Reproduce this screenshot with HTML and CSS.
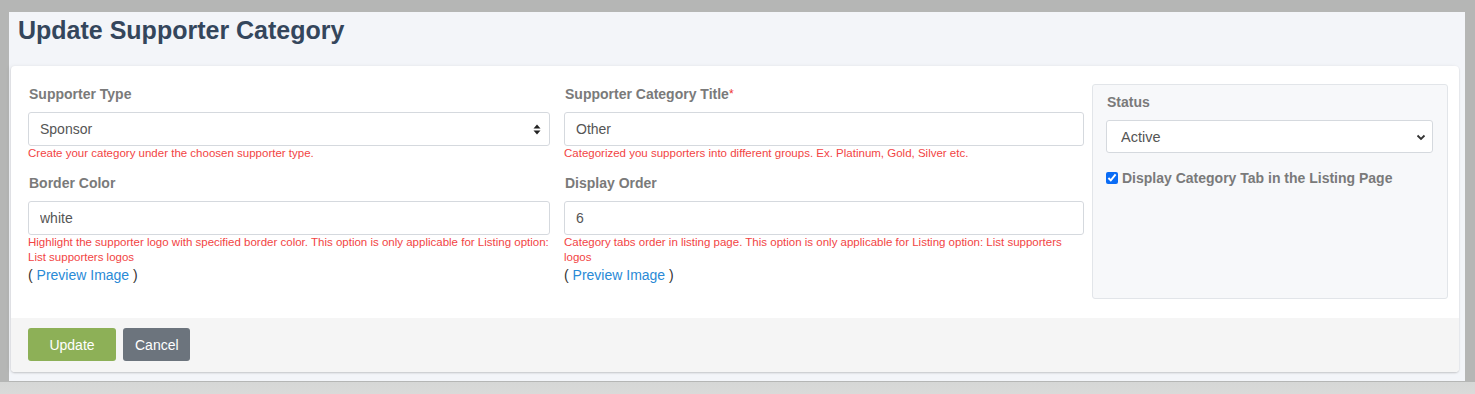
FILE: index.html
```html
<!DOCTYPE html>
<html>
<head>
    <title>Update Supporter Category</title>
    <link rel="stylesheet" href="styles.css">
</head>
<body>
    <div class="page">
        <h1>Update Supporter Category</h1>
        <form class="card">
            <div class="card-body">
                <div class="col col-first">
                    <div class="form-group">
                        <label for="type">Supporter Type</label>
                        <div class="select-wrap">
                            <select id="type" class="form-control">
                                <option>Sponsor</option>
                            </select>
                            <svg class="arrow" width="8" height="11" viewBox="0 0 8 11"><path d="M4 0.5L7.5 4.5H0.5Z M4 10.5L0.5 6.5H7.5Z" fill="#222"/></svg>
                        </div>
                        <div class="help">Create your category under the choosen supporter type.</div>
                    </div>
                    <div class="form-group">
                        <label for="border">Border Color</label>
                        <input type="text" id="border" class="form-control" value="white">
                        <div class="help">Highlight the supporter logo with specified border color. This option is only applicable for Listing option: List supporters logos</div>
                        <div class="preview">( <a href="#">Preview Image</a> )</div>
                    </div>
                </div>
                <div class="col">
                    <div class="form-group">
                        <label for="title">Supporter Category Title<span class="req">*</span></label>
                        <input type="text" id="title" class="form-control" value="Other">
                        <div class="help">Categorized you supporters into different groups. Ex. Platinum, Gold, Silver etc.</div>
                    </div>
                    <div class="form-group">
                        <label for="order">Display Order</label>
                        <input type="text" id="order" class="form-control" value="6">
                        <div class="help">Category tabs order in listing page. This option is only applicable for Listing option: List supporters logos</div>
                        <div class="preview">( <a href="#">Preview Image</a> )</div>
                    </div>
                </div>
                <div class="side-panel">
                    <label for="status">Status</label>
                    <div class="select-wrap">
                        <select id="status" class="form-control">
                            <option>Active</option>
                        </select>
                        <svg class="arrow" width="10" height="7" viewBox="0 0 10 7"><path d="M1.5 1.5L5 5L8.5 1.5" fill="none" stroke="#333" stroke-width="1.8"/></svg>
                    </div>
                    <label class="check"><input type="checkbox" checked> Display Category Tab in the Listing Page</label>
                </div>
            </div>
            <div class="card-footer">
                <button type="submit" class="btn btn-update">Update</button>
                <button type="button" class="btn btn-cancel">Cancel</button>
            </div>
        </form>
    </div>
    <div class="bottom"></div>
</body>
</html>
```

FILE: styles.css
```css
body { margin: 0; background: #b5b6b5; font-family: "Liberation Sans", Arial, sans-serif; overflow: hidden; }
.page { margin: 12px 10px 0 9px; background: #f3f5f9; padding: 0 6px 9px 2px; }
h1 { margin: 0; padding: 3px 0 0 7px; height: 54px; box-sizing: border-box; font-size: 25px; line-height: 30px; color: #34465c; font-weight: bold; }
.card { background: #fff; border-radius: 4px; box-shadow: 0 1px 2px rgba(0,0,0,0.18), -2px 0 4px rgba(0,0,0,0.05); overflow: hidden; }
.card-body { display: grid; grid-template-columns: 528px 520px 356px; column-gap: 8px; padding: 18px 11px 19px 17px; }
.col-first { padding-right: 6px; }
.form-group { margin-bottom: 12px; }
label { display: block; font-size: 14px; font-weight: bold; color: #7a7a7a; line-height: 20px; margin: 0 0 8px 1px; }
.req { color: #e33; font-weight: normal; vertical-align: top; font-size: 12px; }
.form-control { width: 100%; height: 34px; box-sizing: border-box; border: 1px solid #d5d9de; border-radius: 3px; padding: 6px 11px; font-family: inherit; font-size: 14px; color: #555; background: #fff; }
select.form-control { appearance: none; -webkit-appearance: none; }
.select-wrap { position: relative; }
.arrow { position: absolute; right: 9px; top: 12px; }
.help { font-size: 11.5px; line-height: 15px; color: #f24444; margin-top: 0; }
.preview { font-size: 14px; line-height: 20px; color: #333; margin-top: 0; }
.preview a { color: #2a8ad6; text-decoration: none; }
.side-panel { background: #f7f8fa; border: 1px solid #e2e5e9; border-radius: 3px; padding: 7px 14px 0 13px; height: 215px; box-sizing: border-box; }
.side-panel .form-control { height: 33px; padding-left: 14px; font-size: 14.5px; }
.side-panel .arrow { top: 14px; right: 7px; }
.side-panel .check { margin: 15px 0 0 0; display: flex; align-items: center; gap: 4px; }
.check input { margin: 0; width: 12px; height: 12px; accent-color: #0a6cf5; }
.card-footer { background: #f5f5f5; padding: 10px 17px 11px; display: flex; gap: 7px; }
.btn { height: 33px; border: none; border-radius: 3px; color: #fff; font-family: inherit; font-size: 14px; padding: 0 21px; cursor: pointer; }
.btn-update { background: #8db057; width: 88px; }
.btn-cancel { background: #6c747d; width: 67px; padding: 0 12px; }
.bottom { height: 20px; background: linear-gradient(#d6d7d6, #dcdcdb); margin-top: 1px; }
```
